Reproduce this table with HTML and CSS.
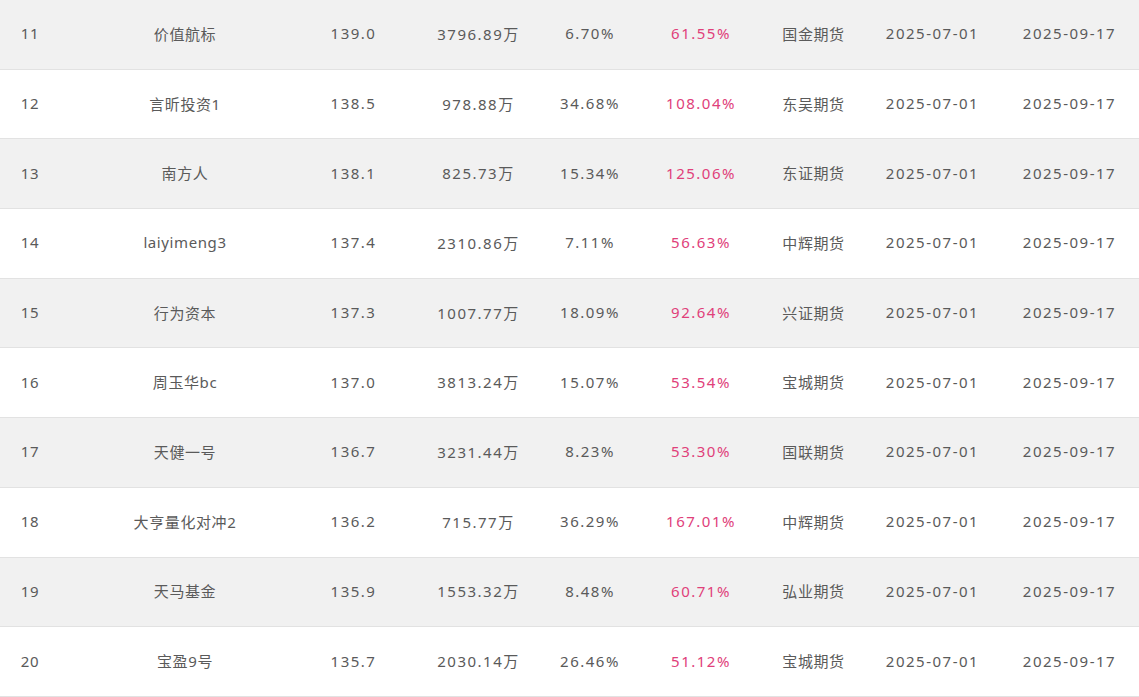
FILE: index.html
```html
<!DOCTYPE html>
<html lang="zh-CN">
<head>
<meta charset="utf-8">
<title>排行</title>
<link rel="stylesheet" href="styles.css">
</head>
<body>
<div class="table">
  <div class="row odd"><span>11</span><span>价值航标</span><span>139.0</span><span>3796.89万</span><span>6.70%</span><span class="pink">61.55%</span><span>国金期货</span><span>2025-07-01</span><span>2025-09-17</span></div>
  <div class="row"><span>12</span><span>言昕投资1</span><span>138.5</span><span>978.88万</span><span>34.68%</span><span class="pink">108.04%</span><span>东吴期货</span><span>2025-07-01</span><span>2025-09-17</span></div>
  <div class="row odd"><span>13</span><span>南方人</span><span>138.1</span><span>825.73万</span><span>15.34%</span><span class="pink">125.06%</span><span>东证期货</span><span>2025-07-01</span><span>2025-09-17</span></div>
  <div class="row"><span>14</span><span>laiyimeng3</span><span>137.4</span><span>2310.86万</span><span>7.11%</span><span class="pink">56.63%</span><span>中辉期货</span><span>2025-07-01</span><span>2025-09-17</span></div>
  <div class="row odd"><span>15</span><span>行为资本</span><span>137.3</span><span>1007.77万</span><span>18.09%</span><span class="pink">92.64%</span><span>兴证期货</span><span>2025-07-01</span><span>2025-09-17</span></div>
  <div class="row"><span>16</span><span>周玉华bc</span><span>137.0</span><span>3813.24万</span><span>15.07%</span><span class="pink">53.54%</span><span>宝城期货</span><span>2025-07-01</span><span>2025-09-17</span></div>
  <div class="row odd"><span>17</span><span>天健一号</span><span>136.7</span><span>3231.44万</span><span>8.23%</span><span class="pink">53.30%</span><span>国联期货</span><span>2025-07-01</span><span>2025-09-17</span></div>
  <div class="row"><span>18</span><span>大亨量化对冲2</span><span>136.2</span><span>715.77万</span><span>36.29%</span><span class="pink">167.01%</span><span>中辉期货</span><span>2025-07-01</span><span>2025-09-17</span></div>
  <div class="row odd"><span>19</span><span>天马基金</span><span>135.9</span><span>1553.32万</span><span>8.48%</span><span class="pink">60.71%</span><span>弘业期货</span><span>2025-07-01</span><span>2025-09-17</span></div>
  <div class="row"><span>20</span><span>宝盈9号</span><span>135.7</span><span>2030.14万</span><span>26.46%</span><span class="pink">51.12%</span><span>宝城期货</span><span>2025-07-01</span><span>2025-09-17</span></div>
</div>
</body>
</html>
```

FILE: styles.css
```css
html, body {
  margin: 0;
  padding: 0;
  background: #ffffff;
}
body {
  font-family: "Noto Sans", "Noto Sans CJK SC", sans-serif;
  font-size: 15px;
  color: #5a5a5a;
  letter-spacing: 0.6px;
}
.table {
  width: 1139px;
}
.row {
  display: grid;
  grid-template-columns: 60px 250px 87px 163px 60px 162px 63px 175px 99px 20px;
  align-items: center;
  box-sizing: border-box;
  height: 69.7px;
  padding-bottom: 2px;
  border-bottom: 1px solid #e2e2e2;
  background: #ffffff;
}
.row.odd {
  background: #f1f1f1;
}
.row span {
  text-align: center;
  white-space: nowrap;
}
.row span:nth-child(3),
.row span:nth-child(4),
.row span:nth-child(5),
.row span:nth-child(6),
.row span:nth-child(8),
.row span:nth-child(9) {
  letter-spacing: 1.5px;
}
.pink {
  color: #e0407a;
}
```
